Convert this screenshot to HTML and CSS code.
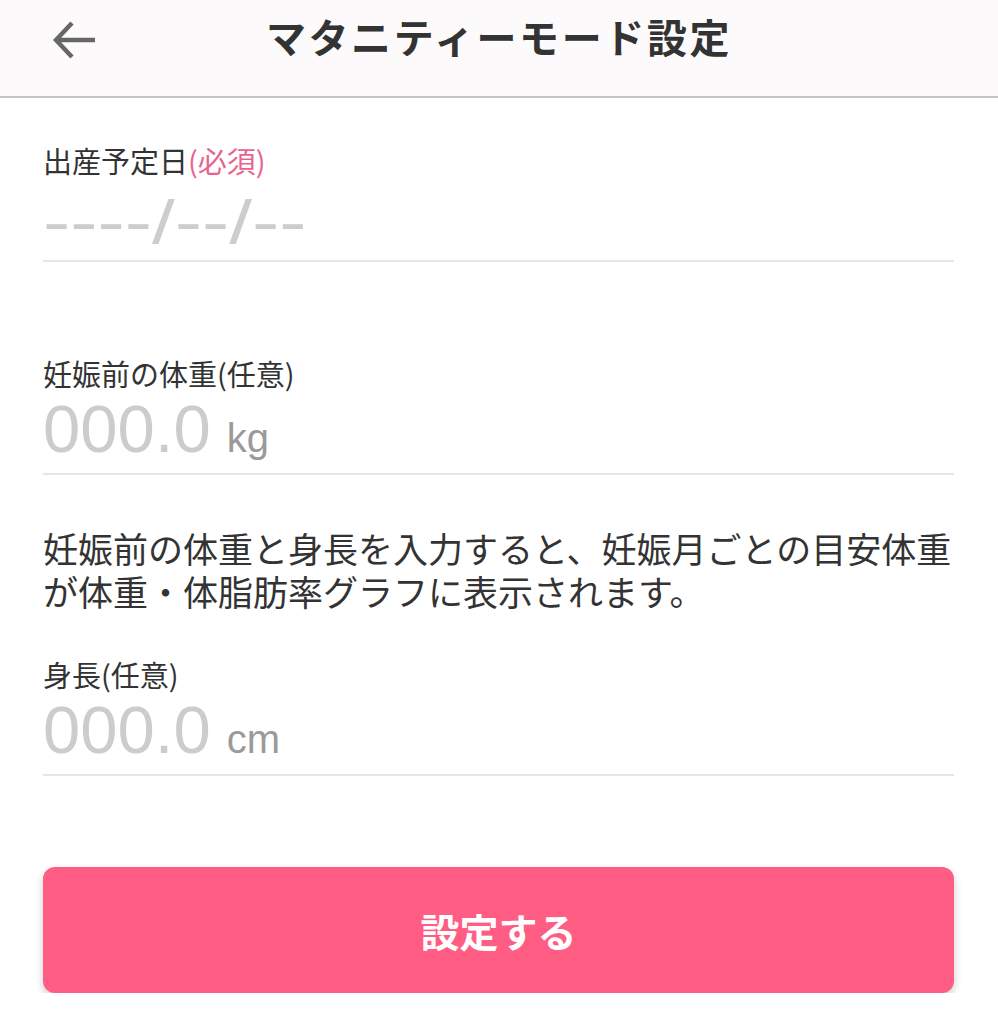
FILE: index.html
```html
<!DOCTYPE html>
<html lang="ja">
<head>
    <meta charset="UTF-8">
    <meta name="viewport" content="width=device-width, initial-scale=1.0">
    <title>マタニティーモード設定</title>
    <link rel="stylesheet" href="styles.css">
</head>
<body>
    <header class="topbar">
        <a class="back" href="#">
            <svg width="44" height="40" viewBox="0 0 44 40">
                <path d="M19 3 L3 20 L19 37 M3 20 H42" fill="none" stroke="#666" stroke-width="4.5"/>
            </svg>
        </a>
        <h1>マタニティーモード設定</h1>
        <span></span>
    </header>
    <main class="form">
        <div class="field field-date">
            <label>出産予定日<span class="req">(必須)</span></label>
            <div class="value date"><span class="dash">----/--/--</span></div>
        </div>

        <div class="field field-weight">
            <label>妊娠前の体重(任意)</label>
            <div class="value"><span class="num">000.0</span><span class="unit">kg</span></div>
        </div>

        <p class="note">妊娠前の体重と身長を入力すると、妊娠月ごとの目安体重が体重・体脂肪率グラフに表示されます。</p>

        <div class="field field-height">
            <label>身長(任意)</label>
            <div class="value"><span class="num">000.0</span><span class="unit">cm</span></div>
        </div>

        <button class="submit" type="button">設定する</button>
    </main>
</body>
</html>
```

FILE: styles.css
```css
/* 基本設定 */
html, body {
    margin: 0;
    padding: 0;
    background: #fff;
    font-family: "Noto Sans CJK JP", "Noto Sans", sans-serif;
    color: #333;
}

/* header */
.topbar {
    display: grid;
    grid-template-columns: 1fr auto 1fr;
    align-items: start;
    height: 96px;
    background-color: #fcfafa;
    border-bottom: 2px solid #c4c4c4;
}

.topbar .back {
    display: block;
    padding: 20px 0 0 53px;
    line-height: 0;
}

.topbar h1 {
    margin: 0;
    padding-top: 10px;
    font-size: 40px;
    line-height: 52px;
    font-weight: bold;
    letter-spacing: 2.6px;
    color: #333;
}

/* form */
.form {
    padding: 44px 44px 0 43px;
}

.field label {
    display: block;
    font-size: 29px;
    line-height: 36px;
    color: #333;
}

.field .req {
    color: #e8648e;
}

.field .value {
    display: flex;
    align-items: baseline;
    margin-top: 6px;
    padding-bottom: 12px;
    border-bottom: 2px solid #e6e6e6;
    white-space: nowrap;
}

.value.date {
    height: 60px;
    margin-top: 14px;
    padding-bottom: 8px;
    align-items: center;
}

.value .dash {
    display: inline-block;
    font-family: "Liberation Sans", sans-serif;
    font-size: 62px;
    line-height: 60px;
    color: #cdcdcd;
    transform: scaleX(1.32);
    transform-origin: left center;
}

.value .num {
    font-family: "Liberation Sans", sans-serif;
    font-size: 67px;
    line-height: 64px;
    color: #cccccc;
}

.value .unit {
    font-family: "Liberation Sans", sans-serif;
    font-size: 40px;
    line-height: 1;
    color: #9a9a9a;
    margin-left: 16px;
}

.field-weight {
    margin-top: 93px;
}

.note {
    margin: 51px -14px 0 0;
    font-size: 35px;
    line-height: 43px;
    color: #333;
}

.field-height {
    margin-top: 44px;
}

.submit {
    display: block;
    width: 100%;
    height: 126px;
    margin-top: 91px;
    border: none;
    border-radius: 12px;
    background-color: #ff5d84;
    color: #fff;
    font-family: "Noto Sans CJK JP", sans-serif;
    font-size: 39px;
    font-weight: bold;
    box-shadow: 0 4px 8px rgba(0, 0, 0, 0.2);
}
```
